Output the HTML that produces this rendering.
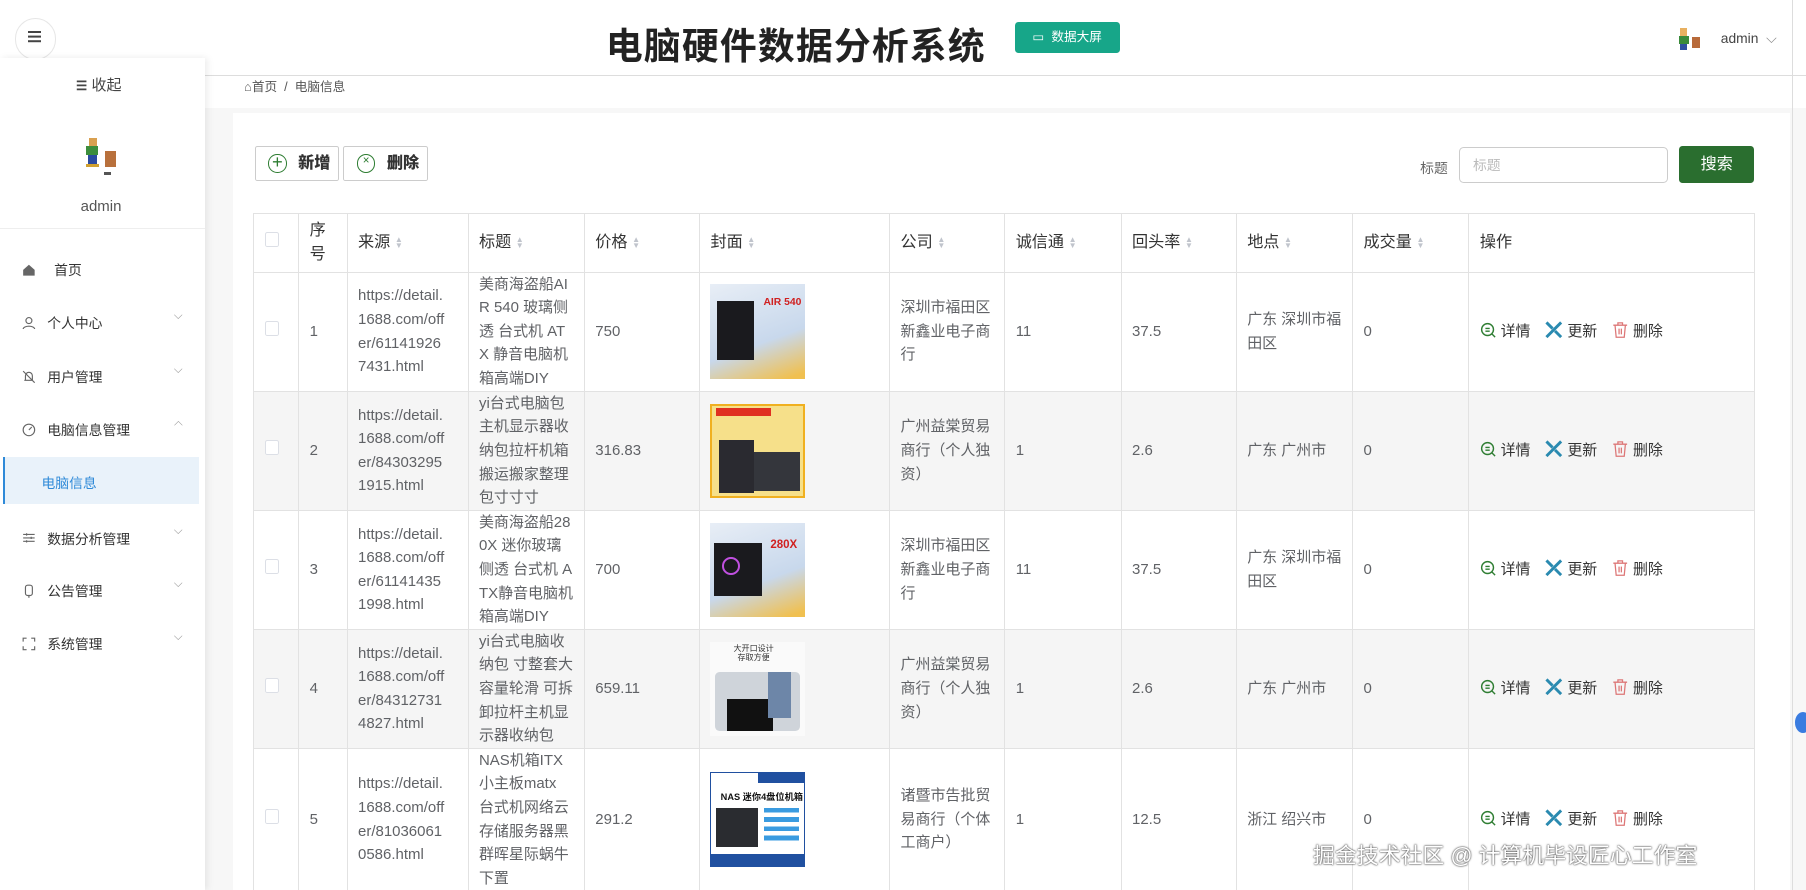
<!DOCTYPE html>
<html><head><meta charset="utf-8"><style>
html,body{margin:0;padding:0;width:1806px;height:890px;overflow:hidden;background:#fff}
#w{zoom:1.1518;width:1568px;height:773px;position:relative;font-family:"Liberation Sans","Noto Sans CJK SC",sans-serif;color:#606266;font-size:14px;overflow:hidden}
.a{position:absolute}
.side{left:0;top:50px;width:178px;height:723px;background:#fff;box-shadow:2px 0 6px rgba(0,0,0,.08)}
.mi{position:absolute;left:0;width:178px;font-size:12px;color:#333}
.mi .ic{position:absolute;left:19px;top:3px;width:12px;height:12px}
.mi .t{position:absolute;left:41px}
.mi .ch{position:absolute;left:151px;top:-2px;font-size:10px;color:#999}
table{border-collapse:collapse;position:absolute;left:220px;top:185px;table-layout:fixed}
td,th{border:1px solid #e2e2e2;padding:0 8px 0 9px;text-align:left;vertical-align:middle;font-size:13px;line-height:20.5px;color:#606266;word-break:break-all;overflow:hidden}
th{height:50px;color:#333;font-weight:normal;font-size:14px}
tr.r td{height:102px}
tr.g td{background:#f5f5f5}
.s{display:inline-block;width:6px;margin-left:4px;vertical-align:middle;color:#c0c4cc;font-size:7px;line-height:5px}
.cb{display:inline-block;width:11px;height:11px;border:1px solid #dcdfe6;background:#fff;border-radius:2px}
.img{width:82px;height:82px;position:relative;overflow:hidden}
.act{font-size:13px;color:#333;white-space:nowrap}
.act span{margin-right:12px}
.act svg{vertical-align:-3px;margin-right:3px}
.btn{position:absolute;top:127px;width:72px;height:28px;border:1px solid #ccc;border-radius:2px;font-size:14px;font-weight:bold;color:#333;line-height:28px}
.btn i{position:absolute;left:11px;top:6px;width:16px;height:16px;border:1.5px solid #2e7d32;border-radius:50%;box-sizing:border-box;color:#2e7d32;font-style:normal;font-weight:normal;text-align:center}
.btn b{position:absolute;left:37px;top:0}
</style></head><body><div id="w">
<div class="a" style="left:13px;top:16px;width:34px;height:34px;border:1px solid #e6e6e6;border-radius:50%;background:#fff"></div>
<div class="a" style="left:24px;top:27px;width:12px;height:2px;background:#444;box-shadow:0 4px 0 #444,0 8px 0 #444"></div>
<div class="a" style="left:526px;top:14px;font-size:32px;font-weight:bold;color:#222;letter-spacing:1px">电脑硬件数据分析系统</div>
<div class="a" style="left:881px;top:19px;width:91px;height:27px;background:#17a689;border-radius:3px;color:#fff;font-size:11px;line-height:27px;text-align:center">▭&nbsp; 数据大屏</div>
<div class="a" style="left:1457px;top:22px;width:20px;height:22px"><div class="a" style="left:2px;top:2px;width:6px;height:8px;background:#e8b060"></div><div class="a" style="left:1px;top:9px;width:8px;height:7px;background:#3a8a3a"></div><div class="a" style="left:2px;top:16px;width:6px;height:5px;background:#2f4fa0"></div><div class="a" style="left:12px;top:10px;width:7px;height:10px;background:#b86a3a"></div></div>
<div class="a" style="left:1494px;top:26px;font-size:12px;color:#444">admin &nbsp;<span style="color:#888">⌵</span></div>
<div class="a" style="left:178px;top:65px;width:1390px;height:1px;background:#ddd"></div>
<div class="a" style="left:178px;top:94px;width:1390px;height:679px;background:#f7f7f7"></div>
<div class="a" style="left:202px;top:98px;width:1352px;height:675px;background:#fff"></div>
<div class="a" style="left:212px;top:66px;font-size:11px;color:#555">⌂首页 &nbsp;/ &nbsp;电脑信息</div>
<div class="a side">
<div class="a" style="left:66px;top:14px;font-size:13px;color:#444"><b style="font-size:11px">☰</b> 收起</div>
<div class="a" style="left:74px;top:69px;width:34px;height:38px">
<div class="a" style="left:3px;top:1px;width:7px;height:7px;background:#d9a050"></div><div class="a" style="left:1px;top:8px;width:10px;height:8px;background:#3c8d3c"></div><div class="a" style="left:2px;top:16px;width:8px;height:7px;background:#2a4aa0"></div><div class="a" style="left:1px;top:23px;width:11px;height:3px;background:#d0a030"></div><div class="a" style="left:17px;top:12px;width:10px;height:14px;background:#b8703c"></div><div class="a" style="left:16px;top:30px;width:6px;height:3px;background:#555"></div></div>
<div class="a" style="left:70px;top:122px;font-size:13px;color:#555">admin</div>
<div class="a" style="left:0;top:148px;width:178px;height:1px;background:#eee"></div>
<div class="mi" style="top:175px"><svg class="ic" viewBox="0 0 12 12"><path d="M1 6L6 1.5L11 6V11H1Z" fill="#666"/></svg><span class="t" style="left:47px">首页</span></div>
<div class="mi" style="top:221px"><svg class="ic" viewBox="0 0 12 12"><circle cx="6" cy="4" r="2.6" fill="none" stroke="#666"/><path d="M1 11.5C1 8 11 8 11 11.5" fill="none" stroke="#666"/></svg><span class="t">个人中心</span><span class="ch">⌵</span></div>
<div class="mi" style="top:268px"><svg class="ic" viewBox="0 0 12 12"><path d="M3 9V5a3 3 0 016 0v4H2M1 1l10 10" fill="none" stroke="#666"/></svg><span class="t">用户管理</span><span class="ch">⌵</span></div>
<div class="mi" style="top:314px"><svg class="ic" viewBox="0 0 12 12"><circle cx="6" cy="6" r="5" fill="none" stroke="#666"/><path d="M6 6L8.5 3.5" stroke="#666"/></svg><span class="t">电脑信息管理</span><span class="ch" style="transform:rotate(180deg)">⌵</span></div>
<div class="a" style="left:3px;top:347px;width:168px;height:41px;background:#e9f2fa;border-left:2px solid #2f8ad8"></div>
<div class="a" style="left:36px;top:360px;font-size:12px;color:#2f8ad8">电脑信息</div>
<div class="mi" style="top:408px"><svg class="ic" viewBox="0 0 12 12"><path d="M1 3h10M1 6h10M1 9h10" stroke="#666"/><path d="M4 2v2M8 5v2M4 8v2" stroke="#666"/></svg><span class="t">数据分析管理</span><span class="ch">⌵</span></div>
<div class="mi" style="top:454px"><svg class="ic" viewBox="0 0 12 12"><rect x="3" y="1" width="6" height="9" rx="2" fill="none" stroke="#666"/><path d="M6 10v2" stroke="#666"/></svg><span class="t">公告管理</span><span class="ch">⌵</span></div>
<div class="mi" style="top:500px"><svg class="ic" viewBox="0 0 12 12"><path d="M1 4V1h3M8 1h3v3M11 8v3H8M4 11H1V8" fill="none" stroke="#666"/></svg><span class="t">系统管理</span><span class="ch">⌵</span></div>
</div>
<div class="btn" style="left:221px"><i style="font-size:16px;line-height:12px">+</i><b>新增</b></div>
<div class="btn" style="left:298px"><i style="font-size:10px;line-height:12px">×</i><b>删除</b></div>
<div class="a" style="left:1233px;top:136px;font-size:12px;color:#666">标题</div>
<div class="a" style="left:1267px;top:128px;width:181px;height:31px;border:1px solid #ccc;border-radius:4px;font-size:12px;color:#bbb;line-height:31px;padding-left:11px;box-sizing:border-box">标题</div>
<div class="a" style="left:1458px;top:127px;width:65px;height:32px;background:#2a6e2f;border-radius:3px;color:#fff;font-size:14px;line-height:32px;text-align:center">搜索</div>
<table>
<colgroup><col style="width:39px"><col style="width:42px"><col style="width:105px"><col style="width:101px"><col style="width:100px"><col style="width:165px"><col style="width:100px"><col style="width:101px"><col style="width:100px"><col style="width:101px"><col style="width:101px"><col style="width:248px"></colgroup>
<tr><th><span class="cb"></span></th><th>序号</th><th>来源<span class="s">▲<br>▼</span></th><th>标题<span class="s">▲<br>▼</span></th><th>价格<span class="s">▲<br>▼</span></th><th>封面<span class="s">▲<br>▼</span></th><th>公司<span class="s">▲<br>▼</span></th><th>诚信通<span class="s">▲<br>▼</span></th><th>回头率<span class="s">▲<br>▼</span></th><th>地点<span class="s">▲<br>▼</span></th><th>成交量<span class="s">▲<br>▼</span></th><th>操作</th></tr>
<tr class="r"><td><span class="cb"></span></td><td>1</td><td>https://detail.<br>1688.com/off<br>er/61141926<br>7431.html</td><td>美商海盗船AI<br>R 540 玻璃侧<br>透 台式机 AT<br>X 静音电脑机<br>箱高端DIY</td><td>750</td><td><div class="img" style="background:linear-gradient(160deg,#e8eef6,#c8d8ec 60%,#f0c050 95%)"><div class="a" style="left:6px;top:14px;width:32px;height:52px;background:#1a1a1e"></div><div class="a" style="left:46px;top:6px;font-size:9px;color:#d02020;font-weight:bold">AIR 540</div></div></td><td>深圳市福田区<br>新鑫业电子商<br>行</td><td>11</td><td>37.5</td><td>广东 深圳市福<br>田区</td><td>0</td><td class="act"><span><svg width="15" height="15" viewBox="0 0 16 16"><circle cx="7" cy="7" r="5.5" fill="none" stroke="#2e7d32" stroke-width="1.3"/><path d="M5 6h4M5 8.5h4M11 11l3 3" stroke="#2e7d32" stroke-width="1.3"/></svg>详情</span><span><svg width="17" height="17" viewBox="0 0 16 16"><path d="M2 14L14 2M2 2l5 5M9 9l5 5" stroke="#2a8ab0" stroke-width="2.4"/></svg>更新</span><span><svg width="16" height="17" viewBox="0 0 16 16"><path d="M2 4h12M6 4V2h4v2M3.5 4l1 10.5h7l1-10.5M7 7v5M9 7v5" fill="none" stroke="#d77" stroke-width="1.1"/></svg>删除</span></td></tr>
<tr class="r g"><td><span class="cb"></span></td><td>2</td><td>https://detail.<br>1688.com/off<br>er/84303295<br>1915.html</td><td>yi台式电脑包<br>主机显示器收<br>纳包拉杆机箱<br>搬运搬家整理<br>包寸寸寸</td><td>316.83</td><td><div class="img" style="background:#f6e08a;border:2px solid #f0b020;box-sizing:border-box"><div class="a" style="left:3px;top:2px;width:48px;height:7px;background:#e03020"></div><div class="a" style="left:6px;top:30px;width:30px;height:46px;background:#2a2a30"></div><div class="a" style="left:36px;top:40px;width:40px;height:34px;background:#34363c"></div></div></td><td>广州益棠贸易<br>商行（个人独<br>资）</td><td>1</td><td>2.6</td><td>广东 广州市</td><td>0</td><td class="act"><span><svg width="15" height="15" viewBox="0 0 16 16"><circle cx="7" cy="7" r="5.5" fill="none" stroke="#2e7d32" stroke-width="1.3"/><path d="M5 6h4M5 8.5h4M11 11l3 3" stroke="#2e7d32" stroke-width="1.3"/></svg>详情</span><span><svg width="17" height="17" viewBox="0 0 16 16"><path d="M2 14L14 2M2 2l5 5M9 9l5 5" stroke="#2a8ab0" stroke-width="2.4"/></svg>更新</span><span><svg width="16" height="17" viewBox="0 0 16 16"><path d="M2 4h12M6 4V2h4v2M3.5 4l1 10.5h7l1-10.5M7 7v5M9 7v5" fill="none" stroke="#d77" stroke-width="1.1"/></svg>删除</span></td></tr>
<tr class="r"><td><span class="cb"></span></td><td>3</td><td>https://detail.<br>1688.com/off<br>er/61141435<br>1998.html</td><td>美商海盗船28<br>0X 迷你玻璃<br>侧透 台式机 A<br>TX静音电脑机<br>箱高端DIY</td><td>700</td><td><div class="img" style="background:linear-gradient(160deg,#e8eef6,#c8d8ec 60%,#f0c050 95%)"><div class="a" style="left:3px;top:18px;width:42px;height:46px;background:#1a1a1e"></div><div class="a" style="left:10px;top:30px;width:12px;height:12px;border-radius:50%;border:2px solid #c050e0"></div><div class="a" style="left:52px;top:10px;font-size:10px;color:#d02020;font-weight:bold">280X</div></div></td><td>深圳市福田区<br>新鑫业电子商<br>行</td><td>11</td><td>37.5</td><td>广东 深圳市福<br>田区</td><td>0</td><td class="act"><span><svg width="15" height="15" viewBox="0 0 16 16"><circle cx="7" cy="7" r="5.5" fill="none" stroke="#2e7d32" stroke-width="1.3"/><path d="M5 6h4M5 8.5h4M11 11l3 3" stroke="#2e7d32" stroke-width="1.3"/></svg>详情</span><span><svg width="17" height="17" viewBox="0 0 16 16"><path d="M2 14L14 2M2 2l5 5M9 9l5 5" stroke="#2a8ab0" stroke-width="2.4"/></svg>更新</span><span><svg width="16" height="17" viewBox="0 0 16 16"><path d="M2 4h12M6 4V2h4v2M3.5 4l1 10.5h7l1-10.5M7 7v5M9 7v5" fill="none" stroke="#d77" stroke-width="1.1"/></svg>删除</span></td></tr>
<tr class="r g"><td><span class="cb"></span></td><td>4</td><td>https://detail.<br>1688.com/off<br>er/84312731<br>4827.html</td><td>yi台式电脑收<br>纳包 寸整套大<br>容量轮滑 可拆<br>卸拉杆主机显<br>示器收纳包</td><td>659.11</td><td><div class="img" style="background:#fafafa"><div class="a" style="left:20px;top:2px;font-size:7px;color:#333;line-height:8px;text-align:center">大开口设计<br>存取方便</div><div class="a" style="left:4px;top:26px;width:74px;height:52px;background:#cfd4da;border-radius:4px"></div><div class="a" style="left:14px;top:50px;width:40px;height:28px;background:#111"></div><div class="a" style="left:50px;top:26px;width:20px;height:40px;background:#6d86a8"></div></div></td><td>广州益棠贸易<br>商行（个人独<br>资）</td><td>1</td><td>2.6</td><td>广东 广州市</td><td>0</td><td class="act"><span><svg width="15" height="15" viewBox="0 0 16 16"><circle cx="7" cy="7" r="5.5" fill="none" stroke="#2e7d32" stroke-width="1.3"/><path d="M5 6h4M5 8.5h4M11 11l3 3" stroke="#2e7d32" stroke-width="1.3"/></svg>详情</span><span><svg width="17" height="17" viewBox="0 0 16 16"><path d="M2 14L14 2M2 2l5 5M9 9l5 5" stroke="#2a8ab0" stroke-width="2.4"/></svg>更新</span><span><svg width="16" height="17" viewBox="0 0 16 16"><path d="M2 4h12M6 4V2h4v2M3.5 4l1 10.5h7l1-10.5M7 7v5M9 7v5" fill="none" stroke="#d77" stroke-width="1.1"/></svg>删除</span></td></tr>
<tr class="r"><td style="height:121px"><span class="cb"></span></td><td>5</td><td>https://detail.<br>1688.com/off<br>er/81036061<br>0586.html</td><td>NAS机箱ITX<br>小主板matx<br>台式机网络云<br>存储服务器黑<br>群晖星际蜗牛<br>下置</td><td>291.2</td><td><div class="img" style="background:#fff;border:1px solid #2050a0;box-sizing:border-box"><div class="a" style="left:40px;top:0;width:40px;height:8px;background:#2050a0"></div><div class="a" style="left:8px;top:11px;font-size:8px;color:#111;font-weight:bold;white-space:nowrap">NAS 迷你4盘位机箱</div><div class="a" style="left:4px;top:30px;width:36px;height:34px;background:#2a2c30"></div><div class="a" style="left:46px;top:30px;width:30px;height:30px;background:repeating-linear-gradient(#3a9be0 0 4px,#fff 4px 8px)"></div><div class="a" style="left:0;top:70px;width:80px;height:10px;background:#2050a0"></div></div></td><td>诸暨市告批贸<br>易商行（个体<br>工商户）</td><td>1</td><td>12.5</td><td>浙江 绍兴市</td><td>0</td><td class="act"><span><svg width="15" height="15" viewBox="0 0 16 16"><circle cx="7" cy="7" r="5.5" fill="none" stroke="#2e7d32" stroke-width="1.3"/><path d="M5 6h4M5 8.5h4M11 11l3 3" stroke="#2e7d32" stroke-width="1.3"/></svg>详情</span><span><svg width="17" height="17" viewBox="0 0 16 16"><path d="M2 14L14 2M2 2l5 5M9 9l5 5" stroke="#2a8ab0" stroke-width="2.4"/></svg>更新</span><span><svg width="16" height="17" viewBox="0 0 16 16"><path d="M2 4h12M6 4V2h4v2M3.5 4l1 10.5h7l1-10.5M7 7v5M9 7v5" fill="none" stroke="#d77" stroke-width="1.1"/></svg>删除</span></td></tr>
</table>
<div class="a" style="left:1556px;top:0;width:1px;height:773px;background:#ddd"></div>
<div class="a" style="left:1558px;top:618px;width:14px;height:18px;border-radius:50%;background:#3a7ce0"></div>
<div class="a" style="left:1140px;top:728px;font-size:19px;color:#fff;text-shadow:0 0 2px #555,0 0 1px #333;white-space:nowrap">掘金技术社区 @ 计算机毕设匠心工作室</div>
</div></body></html>
